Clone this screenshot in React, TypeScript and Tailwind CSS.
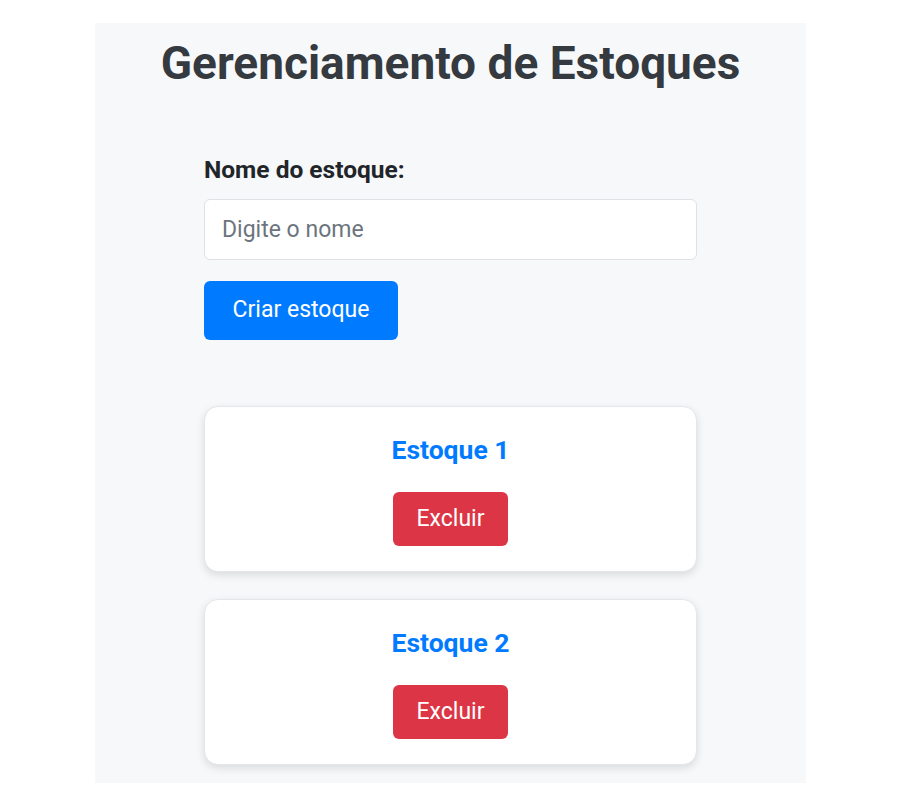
import { useState } from "react";

const initialStocks = [
  { id: 1, name: "Estoque 1" },
  { id: 2, name: "Estoque 2" },
];

export default function App() {
  const [name, setName] = useState("");
  const [stocks, setStocks] = useState(initialStocks);

  function createStock() {
    if (!name.trim()) return;
    setStocks((prev) => [...prev, { id: Date.now(), name: name.trim() }]);
    setName("");
  }

  return (
    <div className="min-h-[800px] bg-white pt-[23px] font-['Roboto',sans-serif]">
      <div className="ml-[95px] w-[711px] bg-[#f7f8fa] pb-[18px]">
        <h1 className="pt-[12px] text-center text-[46px] font-bold leading-[56px] text-[#343a40]">
          Gerenciamento de Estoques
        </h1>

        <div className="mx-[109px] mt-[64px] flex flex-col">
          <label className="text-[24.5px] font-bold leading-[30px] text-[#212529]">Nome do estoque:</label>
          <input
            value={name}
            onChange={(e) => setName(e.target.value)}
            placeholder="Digite o nome"
            className="mt-[14px] h-[61px] w-full rounded-[6px] border border-[#dee2e6] bg-white px-[17px] text-[23px] text-[#212529] outline-none placeholder:text-[#6c757d]"
          />
          <button
            type="button"
            onClick={createStock}
            className="mt-[21px] h-[59px] w-[194px] rounded-[6px] bg-[#007bff] text-[23px] text-white"
          >
            Criar estoque
          </button>

          <div className="mt-[66px] flex flex-col gap-[27px]">
            {stocks.map((stock) => (
              <div
                key={stock.id}
                className="flex h-[166px] flex-col items-center rounded-[14px] border border-[#e3e6ea] bg-white shadow-[0_3px_8px_rgba(0,0,0,0.12)]"
              >
                <h2 className="mt-[27px] text-[26.5px] font-bold leading-[32px] text-[#007bff]">{stock.name}</h2>
                <button
                  type="button"
                  onClick={() => setStocks((prev) => prev.filter((s) => s.id !== stock.id))}
                  className="mt-[26px] h-[54px] w-[115px] rounded-[6px] bg-[#dc3545] text-[23px] text-white"
                >
                  Excluir
                </button>
              </div>
            ))}
          </div>
        </div>
      </div>
    </div>
  );
}
